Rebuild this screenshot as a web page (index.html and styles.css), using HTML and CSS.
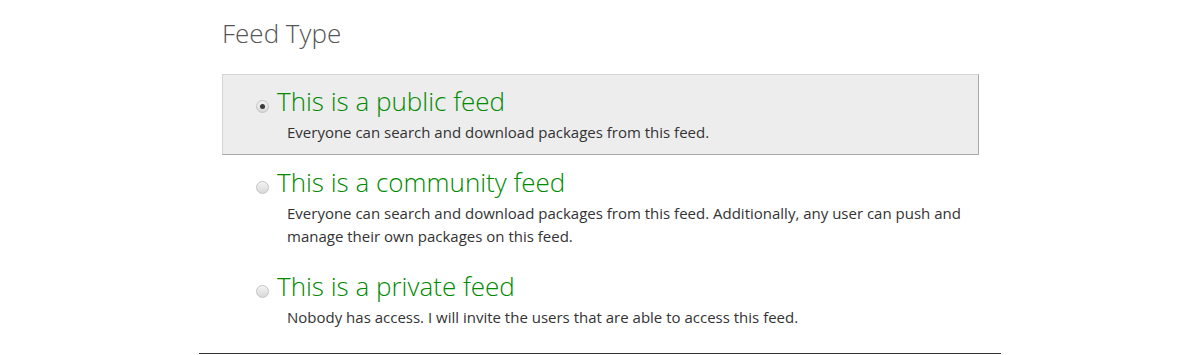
FILE: index.html
```html
<!DOCTYPE html>
<html>
<head>
<meta charset="utf-8">
<link rel="stylesheet" href="styles.css">
</head>
<body>
<div class="page">
  <h2 class="heading">Feed Type</h2>
  <div class="options">
    <label class="option selected">
      <span class="radio checked"></span>
      <span class="body">
        <span class="title">This is a public feed</span>
        <span class="desc">Everyone can search and download packages from this feed.</span>
      </span>
    </label>
    <label class="option">
      <span class="radio"></span>
      <span class="body">
        <span class="title">This is a community feed</span>
        <span class="desc">Everyone can search and download packages from this feed. Additionally, any user can push and manage their own packages on this feed.</span>
      </span>
    </label>
    <label class="option">
      <span class="radio"></span>
      <span class="body">
        <span class="title">This is a private feed</span>
        <span class="desc">Nobody has access. I will invite the users that are able to access this feed.</span>
      </span>
    </label>
  </div>
  <div class="rule"></div>
</div>
</body>
</html>
```
FILE: styles.css
```css
html, body {
  margin: 0;
  padding: 0;
  background: #fff;
}
body {
  font-family: "Open Sans", "Noto Sans", sans-serif;
}
.page {
  width: 802px;
  margin: 0 auto;
  display: flex;
  flex-direction: column;
}
.heading {
  margin: 15px 0 0 23px;
  font-weight: 300;
  font-size: 26px;
  line-height: 36px;
  color: #555;
}
.options {
  margin: 23px 22px 0 23px;
  display: flex;
  flex-direction: column;
}
.option {
  display: flex;
  align-items: flex-start;
  padding: 8px 0 10px 33px;
  border: 1px solid transparent;
}
.option.selected {
  background: #ededed;
  border-color: #d4d4d4 #a8a8a8 #a8a8a8 #d4d4d4;
}
.radio {
  flex: none;
  width: 11px;
  height: 11px;
  margin-top: 17px;
  margin-right: 8px;
  border-radius: 50%;
  border: 1px solid #c4c4c4;
  background: linear-gradient(#f4f4f4, #d8d8d8);
  display: flex;
  align-items: center;
  justify-content: center;
}
.radio.checked::after {
  content: "";
  width: 5px;
  height: 5px;
  border-radius: 50%;
  background: #3a3a3a;
}
.body {
  display: flex;
  flex-direction: column;
}
.title {
  font-size: 26px;
  font-weight: 300;
  line-height: 36px;
  color: #008a00;
}
.desc {
  margin: 2px 0 0 10px;
  font-size: 15px;
  line-height: 23px;
  color: #333;
  max-width: 690px;
}
.rule {
  margin-top: 13px;
  height: 1px;
  background: #333;
}
```
